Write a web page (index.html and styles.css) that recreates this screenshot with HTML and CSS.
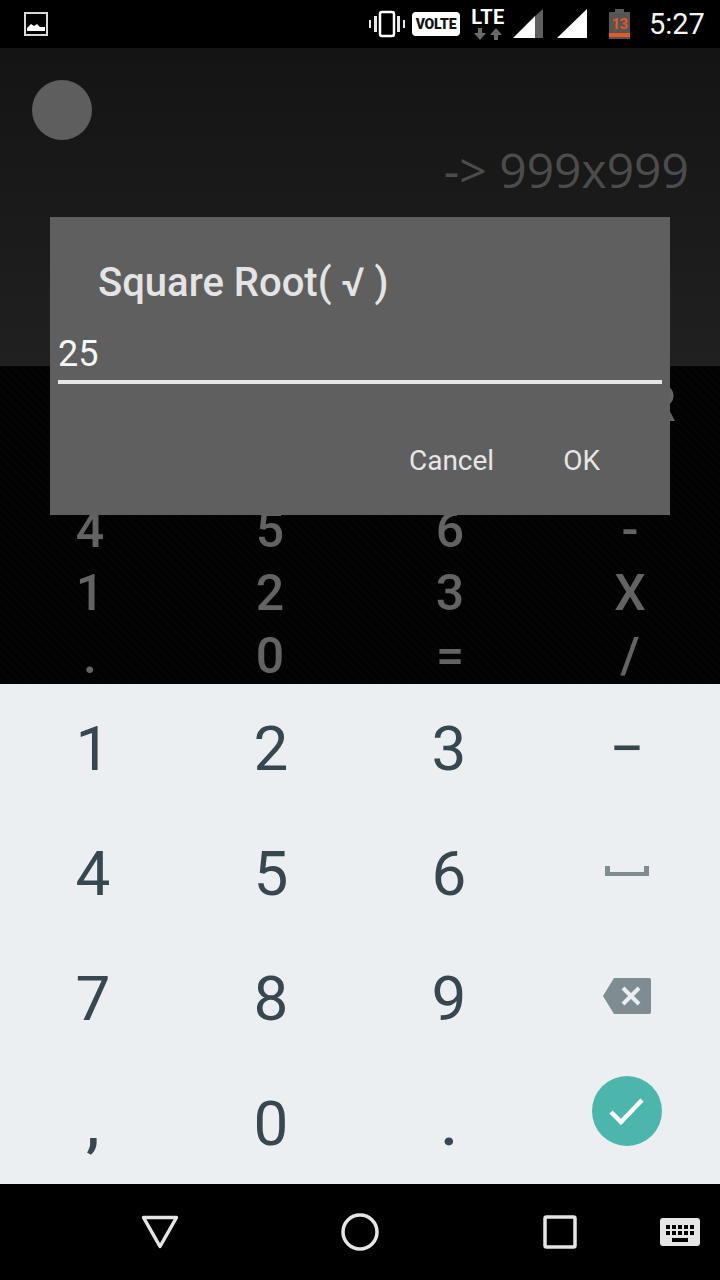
FILE: index.html
```html
<!DOCTYPE html>
<html lang="en">
<head>
<meta charset="utf-8">
<title>Square Root</title>
<link rel="stylesheet" href="styles.css">
</head>
<body>
<div class="screen">
  <header class="status">
    <svg class="ic-image" width="24" height="24" viewBox="0 0 24 24"><rect x="1" y="1" width="22" height="22" fill="none" stroke="#d8d8d8" stroke-width="2"/><path d="M3 19v-3l4-4 3 2 3-2 3 3 5 0v4z" fill="#fff"/></svg>
    <div class="status-right">
      <svg class="ic-vib" width="36" height="28" viewBox="0 0 36 28"><path d="M0 10h2v8H0zM5 6h3v16H5zM28 6h3v16h-3zM34 10h2v8h-2z" fill="#e8e8e8"/><rect x="11" y="2" width="14" height="24" rx="2" fill="none" stroke="#fff" stroke-width="2.5"/></svg>
      <div class="volte">VOLTE</div>
      <div class="lte">
        <span class="lte-text">LTE</span>
        <svg width="28" height="12" viewBox="0 0 28 12"><path d="M4 0h4v5h4l-6 7-6-7h4zM20 12h4V7h4l-6-7-6 7h4z" fill="#6a6a6a"/></svg>
      </div>
      <svg class="ic-sig1" width="30" height="30" viewBox="0 0 30 30"><path d="M0 29 22 7v22z" fill="#fff"/><path d="M22 7l8-7v29h-8z" fill="#5f5f5f"/></svg>
      <svg class="ic-sig2" width="30" height="30" viewBox="0 0 30 30"><path d="M0 29 30 0v29z" fill="#fff"/></svg>
      <div class="batt">
        <span class="batt-cap"></span>
        <span class="batt-body">13</span>
      </div>
      <div class="time">5:27</div>
    </div>
  </header>

  <main class="app">
    <section class="display">
      <div class="dot"></div>
      <div class="readout">-&gt; 999x999</div>
    </section>
    <section class="pad">
      <span class="cell wide"></span>
      <span class="cell r-cell">R</span>
      <span class="cell wide"></span>
      <span class="cell">4</span><span class="cell">5</span><span class="cell">6</span><span class="cell">-</span>
      <span class="cell">1</span><span class="cell">2</span><span class="cell">3</span><span class="cell">X</span>
      <span class="cell">.</span><span class="cell">0</span><span class="cell">=</span><span class="cell">/</span>
    </section>
    <div class="dialog">
      <h1 class="dialog-title">Square Root( √ )</h1>
      <div class="dialog-input">25</div>
      <div class="dialog-actions">
        <span class="btn btn-cancel">Cancel</span>
        <span class="btn btn-ok">OK</span>
      </div>
    </div>
  </main>

  <section class="kbd">
    <span class="key">1</span><span class="key">2</span><span class="key">3</span><span class="key key-minus">−</span>
    <span class="key">4</span><span class="key">5</span><span class="key">6</span>
    <span class="key"><svg class="ic-space" width="44" height="10" viewBox="0 0 44 10"><path d="M0 0h5v6h34V0h5v10H0z" fill="#7f8c92"/></svg></span>
    <span class="key">7</span><span class="key">8</span><span class="key">9</span>
    <span class="key"><svg class="ic-back" width="48" height="36" viewBox="0 0 48 36"><path d="M11 0h35a2 2 0 0 1 2 2v32a2 2 0 0 1-2 2H11L0 18z" fill="#7f8c92"/><path d="M20 10l16 16M36 10 20 26" stroke="#eceff1" stroke-width="4" fill="none"/></svg></span>
    <span class="key key-small">,</span><span class="key">0</span><span class="key key-small">.</span>
    <span class="key"><span class="enter"><svg width="36" height="28" viewBox="0 0 36 28"><path d="M2 15l10 10L33 3" fill="none" stroke="#fff" stroke-width="4.5"/></svg></span></span>
  </section>

  <nav class="nav">
    <span class="nav-cell"><svg width="38" height="34" viewBox="0 0 38 34"><path d="M2.500 2.500h33L19 31.500z" fill="none" stroke="#e6e6e6" stroke-width="3.500" stroke-linejoin="round"/></svg></span>
    <span class="nav-cell"><svg width="38" height="38" viewBox="0 0 38 38"><circle cx="19" cy="19" r="17" fill="none" stroke="#e6e6e6" stroke-width="3.500"/></svg></span>
    <span class="nav-cell"><svg width="34" height="34" viewBox="0 0 34 34"><rect x="2" y="2" width="30" height="30" rx="1.500" fill="none" stroke="#e6e6e6" stroke-width="3.500"/></svg></span>
    <span class="nav-cell"><svg width="40" height="28" viewBox="0 0 40 28"><rect width="40" height="28" rx="3" fill="#e6e6e6"/><path d="M6 7h4v4H6zM12 7h4v4h-4zM18 7h4v4h-4zM24 7h4v4h-4zM30 7h4v4h-4zM6 13h4v4H6zM12 13h4v4h-4zM18 13h4v4h-4zM24 13h4v4h-4zM30 13h4v4h-4zM12 20h16v4H12z" fill="#000"/></svg></span>
  </nav>
</div>
</body>
</html>
```

FILE: styles.css
```css
* { box-sizing: border-box; }
html, body { margin: 0; padding: 0; background: #000; }
.screen { width: 720px; height: 1280px; display: flex; flex-direction: column; overflow: hidden; font-family: Roboto, "Liberation Sans", sans-serif; }

.status { height: 48px; flex: none; background: #000; display: flex; align-items: center; justify-content: space-between; padding: 0 16px 0 24px; }
.ic-image { display: block; }
.status-right { display: flex; align-items: center; height: 48px; }
.ic-vib { margin-right: 7px; }
.volte { width: 48px; height: 24px; background: #fff; border-radius: 4px; color: #111; font-size: 14px; font-weight: 900; line-height: 24px; text-align: center; margin-right: 10px; letter-spacing: -0.2px; }
.lte { width: 36px; display: flex; flex-direction: column; align-items: center; margin-right: 7px; }
.lte-text { color: #fff; font-size: 20px; font-weight: 700; line-height: 18px; margin-bottom: 2px; letter-spacing: 0.5px; }
.lte svg { display: block; }
.ic-sig1 { margin-right: 14px; }
.ic-sig2 { margin-right: 22px; }
.batt { width: 21px; height: 30px; display: flex; flex-direction: column; align-items: center; margin-right: 19px; }
.batt-cap { width: 9px; height: 3px; background: #5a5a5a; display: block; }
.batt-body { width: 21px; height: 27px; background: linear-gradient(#555 0 21px, #e8572a 21px 25px, #555 25px); color: #e8572a; font-size: 15px; font-weight: 700; line-height: 24px; text-align: center; display: block; letter-spacing: -0.5px; }
.time { color: #f4f4f4; font-size: 29px; line-height: 48px; width: 55px; white-space: nowrap; }

.app { height: 636px; flex: none; position: relative; display: flex; flex-direction: column; background: #000; overflow: hidden; }
.display { height: 318px; flex: none; background: linear-gradient(#141414, #202020); padding: 32px 31px 0 32px; display: flex; flex-direction: column; }
.dot { width: 60px; height: 60px; border-radius: 50%; background: #5e5e5e; }
.readout { align-self: flex-end; color: #4c4c4c; font-family: "Open Sans", sans-serif; font-size: 48px; line-height: 60px; }
.pad { flex: 1; display: grid; grid-template-columns: repeat(4, 1fr); grid-auto-rows: 63px; padding-top: 7px; background: repeating-linear-gradient(45deg, #040404 0 3px, #020202 3px 6px); }
.cell { display: block; text-align: center; color: #636363; font-size: 50px; font-weight: 500; line-height: 63px; }
.wide { grid-column: 1 / span 3; }
.r-cell { grid-column: 4; text-align: right; padding-right: 44px; }
.wide:nth-of-type(3) { grid-column: 1 / span 4; }

.dialog { position: absolute; left: 50px; top: 169px; width: 620px; height: 298px; background: #5f5f5f; padding: 41px 8px 0; }
.dialog-title { margin: 0 0 0 40px; color: #e4e4e4; font-size: 40px; font-weight: 500; line-height: 50px; }
.dialog-input { margin-top: 24px; height: 52px; border-bottom: 4px solid #e6e6e6; color: #f6f6f6; font-size: 36px; line-height: 44px; }
.dialog-actions { display: flex; justify-content: flex-end; margin-top: 53px; padding-right: 62px; }
.btn { color: #e6e6e6; font-size: 28px; line-height: 48px; }
.btn-cancel { margin-right: 69px; }

.kbd { height: 500px; flex: none; background: #eceff1; display: grid; grid-template-columns: repeat(4, 1fr); grid-template-rows: repeat(4, 1fr); padding: 0 4px; }
.key { display: flex; align-items: center; justify-content: center; color: #37474f; font-size: 62px; line-height: 1; padding-top: 4px; }
.key svg { display: block; }
.key-minus { font-weight: 400; }
.key-small { font-weight: 500; }
.ic-space { margin-top: -6px; }
.ic-back { margin-top: -6px; }
.enter { width: 70px; height: 70px; border-radius: 50%; background: #4db6ac; display: flex; align-items: center; justify-content: center; margin-top: -26px; }

.nav { height: 96px; flex: none; background: #000; display: grid; grid-template-columns: 200px 200px 200px 40px; padding-left: 60px; align-items: center; }
.nav-cell { display: flex; justify-content: center; }
.nav-cell svg { display: block; }
```
